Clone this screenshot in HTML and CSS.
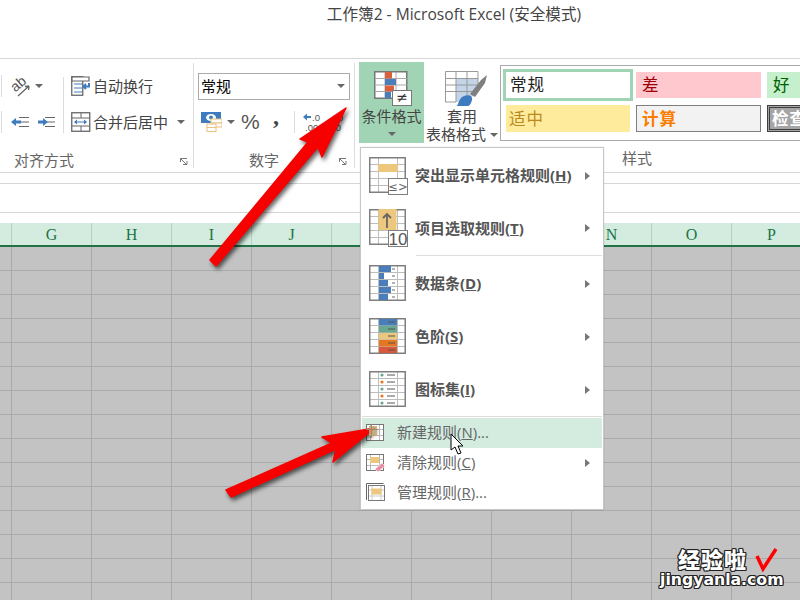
FILE: index.html
```html
<!DOCTYPE html>
<html lang="en">
<head>
    <meta charset="UTF-8">
    <title>工作簿2 - Microsoft Excel</title>
    <link rel="stylesheet" href="styles.css">
</head>
<body>
    <svg class="defs" width="0" height="0">
        <symbol id="sheet" viewBox="0 0 37 36">
            <path d="M9.5 0v36M28.5 0v36M0 7.5h37M0 14.5h37M0 21.5h37M0 28.5h37" stroke="#bdbdbd" fill="none"/>
            <rect x=".75" y=".75" width="35.5" height="34.5" fill="none" stroke="#7f7f7f" stroke-width="1.5"/>
        </symbol>
    </svg>

    <header class="title-bar">工作簿2 - Microsoft Excel (安全模式)</header>

    <section class="ribbon">
        <div class="group group-align">
            <div class="group-body">
                <div class="align-left">
                    <div class="tool-row">
                        <svg width="20" height="22" viewBox="0 0 20 22">
                            <text x="0" y="14" transform="rotate(-40 7 10)" class="ab-text">ab</text>
                            <path d="M7 21L18 11M18 11l-4 .5M18 11l-.5 4" stroke="#666" stroke-width="1.3" fill="none"/>
                        </svg>
                        <i class="caret caret-ab"></i>
                    </div>
                    <div class="tool-row">
                        <svg width="19" height="12" viewBox="0 0 19 12">
                            <path d="M8 1.5h10M8 6h10M8 10.5h10" stroke="#666" fill="none"/>
                            <path d="M0 6l5-4v2.5h5v3H5V10z" fill="#3f7cbf"/>
                        </svg>
                        <svg class="indent-right" width="19" height="12" viewBox="0 0 19 12">
                            <path d="M8 1.5h10M8 6h10M8 10.5h10" stroke="#666" fill="none"/>
                            <path d="M11 6L6 2v2.5H1v3h5V10z" fill="#3f7cbf"/>
                        </svg>
                    </div>
                </div>
                <div class="align-right">
                    <div class="tool-row">
                        <svg width="20" height="20" viewBox="0 0 20 20">
                            <rect x=".75" y=".75" width="11" height="18.5" fill="none" stroke="#666" stroke-width="1.3"/>
                            <path d="M1 1h17v4H1z" fill="#fff" stroke="#666" stroke-width="1.2"/>
                            <path d="M3 8h8M3 12h8M3 16h8" stroke="#3f7cbf" fill="none" stroke-width="1.2"/>
                            <path d="M18 7v3.5h-5M15 8l-2.5 2.500L15 13" stroke="#3f7cbf" stroke-width="2" fill="none"/>
                        </svg>
                        <span class="tool-text">自动换行</span>
                    </div>
                    <div class="tool-row">
                        <svg width="20" height="20" viewBox="0 0 20 20">
                            <rect x=".75" y=".75" width="18" height="18.5" fill="#fff" stroke="#666" stroke-width="1.3"/>
                            <path d="M1 6h18M1 14h18M10 1v5M10 14v5" stroke="#666" fill="none"/>
                            <path d="M3 10l3-2.5v2h7v-2l3 2.500-3 2.500v-2H6v2z" fill="#3f7cbf"/>
                        </svg>
                        <span class="tool-text">合并后居中</span>
                        <i class="caret caret-merge"></i>
                    </div>
                </div>
            </div>
            <div class="group-label label-align">
                <span>对齐方式</span>
                <svg class="launcher" width="8" height="8" viewBox="0 0 8 8"><path d="M.5 4V.5H7M.5.5L6 6M3 6.5h4V3" stroke="#777" fill="none"/></svg>
            </div>
        </div>

        <div class="group group-number">
            <div class="group-body number-body">
                <div class="combo"><span>常规</span><i class="caret"></i></div>
                <div class="tool-row number-tools">
                    <svg width="21" height="20" viewBox="0 0 21 20">
                        <rect x="0" y="0" width="20" height="11" fill="#3f7cbf"/>
                        <ellipse cx="10" cy="5.5" rx="5" ry="3.5" fill="#fff"/>
                        <circle cx="10" cy="5.5" r="2" fill="#3f7cbf"/>
                        <rect x="10" y="7" width="11" height="4" fill="#fff" stroke="#e8c27e"/>
                        <rect x="12" y="11" width="9" height="4" fill="#fff" stroke="#e8c27e"/>
                        <rect x="6" y="12" width="9" height="3.5" fill="#fff" stroke="#e8c27e"/>
                        <rect x="6" y="15.5" width="9" height="4" fill="#fff" stroke="#e8c27e"/>
                    </svg>
                    <i class="caret caret-currency"></i>
                    <span class="percent">%</span>
                    <span class="comma">,</span>
                    <span class="tool-sep"></span>
                    <svg class="decimal" width="20" height="20" viewBox="0 0 20 20">
                        <path d="M0 5l4-3.5v2.500h4v2H4v2.500z" fill="#3f7cbf"/>
                        <text x="9" y="9" class="decimal-text">.0</text>
                        <text x="2" y="19" class="decimal-text">.00</text>
                    </svg>
                    <svg class="decimal" width="20" height="20" viewBox="0 0 20 20">
                        <text x="4" y="9" class="decimal-text">.00</text>
                        <text x="7" y="19" class="decimal-text">.0</text>
                    </svg>
                </div>
            </div>
            <div class="group-label label-number">
                <span>数字</span>
                <svg class="launcher" width="8" height="8" viewBox="0 0 8 8"><path d="M.5 4V.5H7M.5.5L6 6M3 6.5h4V3" stroke="#777" fill="none"/></svg>
            </div>
        </div>

        <div class="group group-styles">
            <div class="styles-top">
                <div class="big-button big-button-active">
                    <svg width="38" height="35" viewBox="0 0 38 35">
                        <rect x=".75" y=".75" width="32" height="26.5" fill="#fff" stroke="#777" stroke-width="1.5"/>
                        <path d="M11 1v26M22 1v26M1 7.5h32M1 14h32M1 20.5h32" stroke="#aaa" fill="none"/>
                        <rect x="11" y="1" width="7" height="6.5" fill="#d9603c"/>
                        <rect x="11" y="8" width="11" height="6" fill="#4a7ebb"/>
                        <rect x="11" y="14.5" width="9" height="6" fill="#d9603c"/>
                        <rect x="11" y="21" width="6" height="6" fill="#4a7ebb"/>
                        <rect x="18.5" y="19.5" width="19" height="15" fill="#fff" stroke="#777"/>
                        <text x="28" y="31" class="ne-text">≠</text>
                    </svg>
                    <span class="big-label">条件格式</span>
                    <i class="caret caret-big"></i>
                </div>
                <div class="big-button big-button-table">
                    <svg width="44" height="35" viewBox="0 0 44 35">
                        <path d="M11 7.5h22V20L22 31H11z" fill="#c4d5e9"/>
                        <path d="M.5 31V.5h32.5V20M11 1v30M22 1v30M1 7.5h32M1 14h32M1 20.5h32M.5 31H11" stroke="#999" fill="none"/>
                        <path d="M25 23L36 9l6-5-2 8-10 14z" fill="#7f7f7f"/>
                        <path d="M11 35c3 0 2-8 8-10 5-2 9 0 8 4-.5 2-2 6-4 6z" fill="#3f7cbf"/>
                    </svg>
                    <span class="big-label">套用</span>
                    <span class="big-label">表格格式<i class="caret caret-table"></i></span>
                </div>
                <div class="gallery">
                    <div class="cell cell-normal">常规</div>
                    <div class="cell cell-bad">差</div>
                    <div class="cell cell-good">好</div>
                    <div class="cell cell-neutral">适中</div>
                    <div class="cell cell-calc">计算</div>
                    <div class="cell cell-check">检查</div>
                </div>
            </div>
            <div class="group-label label-styles"><span>样式</span></div>
        </div>
    </section>

    <div class="formula-bar"></div>

    <div class="col-header">
        <span class="corner"></span>
        <span>G</span><span>H</span><span>I</span><span>J</span><span></span>
        <span></span><span></span><span>N</span><span>O</span><span>P</span>
    </div>
    <div class="grid"></div>

    <div class="menu">
        <div class="menu-big">
            <svg class="menu-icon" width="40" height="38" viewBox="0 0 40 38">
                <use href="#sheet" width="37" height="36"/>
                <rect x="9" y="7" width="20" height="8" fill="#eec77f"/>
                <rect x="19.5" y="21.5" width="19" height="16" fill="#fff" stroke="#7f7f7f"/>
                <text x="29" y="34" class="icon-glyph">≤&gt;</text>
            </svg>
            <span class="menu-text-big">突出显示单元格规则(<u>H</u>)</span>
            <i class="submenu"></i>
        </div>
        <div class="menu-big menu-big-tight">
            <svg class="menu-icon" width="40" height="38" viewBox="0 0 40 38">
                <use href="#sheet" width="37" height="36"/>
                <rect x="9.5" y="0" width="18" height="21" fill="#eec77f"/>
                <path d="M18 19V5M14 9l4-4 4 4" stroke="#666" stroke-width="1.8" fill="none"/>
                <rect x="19.5" y="21.5" width="19" height="16" fill="#fff" stroke="#7f7f7f"/>
                <text x="29" y="36" class="icon-num">10</text>
            </svg>
            <span class="menu-text-big">项目选取规则(<u>T</u>)</span>
            <i class="submenu"></i>
        </div>
        <div class="menu-sep menu-sep-short"></div>
        <div class="menu-big">
            <svg class="menu-icon" width="40" height="38" viewBox="0 0 40 38">
                <use href="#sheet" width="37" height="36"/>
                <rect x="10" y="1" width="12" height="6" fill="#4a7ebb"/>
                <rect x="10" y="8" width="5" height="6" fill="#4a7ebb"/>
                <rect x="10" y="15" width="9" height="6" fill="#4a7ebb"/>
                <rect x="10" y="22" width="12" height="6" fill="#4a7ebb"/>
                <rect x="10" y="29" width="9" height="6" fill="#4a7ebb"/>
                <path d="M23 4h3M23 11h3M23 18h3M23 25h3M23 32h3" stroke="#666" fill="none"/>
            </svg>
            <span class="menu-text-big">数据条(<u>D</u>)</span>
            <i class="submenu"></i>
        </div>
        <div class="menu-big">
            <svg class="menu-icon" width="40" height="38" viewBox="0 0 40 38">
                <use href="#sheet" width="37" height="36"/>
                <rect x="10" y="1" width="18" height="6.5" fill="#4a7ebb"/>
                <rect x="10" y="8" width="18" height="6.5" fill="#6aa78f"/>
                <rect x="10" y="15" width="18" height="6.5" fill="#eec77f"/>
                <rect x="10" y="22" width="18" height="6.5" fill="#e6761f"/>
                <rect x="10" y="29" width="18" height="6" fill="#d9573a"/>
                <path d="M19 4h7M19 11h7M19 18h7M19 25h7M19 32h7" stroke="#555" fill="none"/>
            </svg>
            <span class="menu-text-big">色阶(<u>S</u>)</span>
            <i class="submenu"></i>
        </div>
        <div class="menu-big">
            <svg class="menu-icon" width="40" height="38" viewBox="0 0 40 38">
                <use href="#sheet" width="37" height="36"/>
                <circle cx="13" cy="4" r="1.6" fill="#6aa78f"/>
                <circle cx="13" cy="11" r="1.6" fill="#e6761f"/>
                <circle cx="13" cy="18" r="1.6" fill="#6aa78f"/>
                <circle cx="13" cy="25" r="1.6" fill="#e6761f"/>
                <circle cx="13" cy="32" r="1.6" fill="#6aa78f"/>
                <path d="M18 4h8M18 11h8M18 18h8M18 25h8M18 32h8" stroke="#555" fill="none"/>
            </svg>
            <span class="menu-text-big">图标集(<u>I</u>)</span>
            <i class="submenu"></i>
        </div>
        <div class="menu-sep"></div>
        <div class="menu-small menu-small-active">
            <svg class="small-icon" width="20" height="20" viewBox="0 0 20 20">
                <rect x=".5" y="1.500" width="17" height="16" fill="#fff" stroke="#777"/>
                <path d="M4.500 2v15M13.500 2v15M1 6.500h16M1 12.500h16" stroke="#bbb" fill="none"/>
            </svg>
            <span class="menu-text">新建规则(<u>N</u>)...</span>
        </div>
        <div class="menu-small">
            <svg class="small-icon" width="20" height="20" viewBox="0 0 20 20">
                <rect x=".5" y="1.500" width="17" height="16" fill="#fff" stroke="#777"/>
                <path d="M4.500 2v15M13.500 2v15M1 6.500h16M1 12.500h16" stroke="#bbb" fill="none"/>
                <rect x="4" y="4" width="9" height="6" fill="#eec77f"/>
                <path d="M9 16l7-6 3 3-7 6z" fill="#ea8fa3" stroke="#fff" stroke-width=".6"/>
            </svg>
            <span class="menu-text">清除规则(<u>C</u>)</span>
            <i class="submenu"></i>
        </div>
        <div class="menu-small">
            <svg class="small-icon" width="20" height="20" viewBox="0 0 20 20">
                <path d="M.5 17V.5h17" stroke="#666" fill="none"/>
                <rect x="2.500" y="2.500" width="16" height="15" fill="#fff" stroke="#777"/>
                <path d="M6 3v14M15 3v14M3 7h15M3 13h15" stroke="#ccc" fill="none"/>
                <rect x="5.500" y="5.500" width="10" height="6" fill="#eec77f"/>
            </svg>
            <span class="menu-text">管理规则(<u>R</u>)...</span>
        </div>
    </div>

    <svg class="overlay" width="800" height="600" viewBox="0 0 800 600">
        <path class="arrow" d="M210 260L308 142 300 139 346 108 322 157 318 147 216 266z"/>
        <path class="arrow" d="M226 490L332 443 322 437 375 428 333 462 336 449 231 497z"/>
        <path d="M369 426h8v10h-8z" fill="#c9a876" opacity=".85"/>
        <path d="M366 429.500h12M371.500 424v14" stroke="#9a8a70" fill="none"/>
        <path d="M451 434v16l4-3 3 7 3-1-3-7h5z" fill="#fff" stroke="#000"/>
        <path d="M757 556l6 13 13-20" stroke="#f00" stroke-width="3.5" fill="none"/>
    </svg>

    <div class="watermark">
        <div class="wm-top">经验啦</div>
        <div class="wm-bottom">jingyanla.com</div>
    </div>
</body>
</html>
```

FILE: styles.css
```css
* { box-sizing: border-box; }
html, body { margin: 0; height: 100%; }
body { width: 800px; height: 600px; overflow: hidden; display: flex; flex-direction: column; position: relative; background: #fff; font-family: "Open Sans", "Noto Sans CJK SC", sans-serif; color: #444; }
.defs { position: absolute; }
i { display: block; font-style: normal; }

.title-bar { height: 59px; padding: 3px 0 0 108px; border-bottom: 1px solid #d6d6d6; text-align: center; font-size: 15.6px; line-height: 22px; color: #444; }

.ribbon { height: 114px; padding-top: 4px; display: flex; border-bottom: 1px solid #d6d6d6; }
.group { display: flex; flex-direction: column; height: 105px; }
.group-body { height: 77px; }
.group-label { display: flex; align-items: center; justify-content: space-between; height: 28px; padding-top: 12px; font-size: 15px; line-height: 14px; color: #666; }
.launcher { margin-top: 3px; }

.group-align { width: 194px; border-right: 1px solid #dcdcdc; }
.group-align .group-body { display: flex; padding-top: 5px; }
.label-align { padding: 12px 5px 0 14px; }
.align-left { width: 62px; margin-left: 1px; }
.align-right { flex: 1; }
.tool-row { display: flex; align-items: center; height: 36px; }
.align-left .tool-row { padding-left: 9px; border-left: 1px solid #dcdcdc; height: 22px; margin: 7px 0 14px; }
.align-right { border-left: 1px solid #dcdcdc; height: 56px; margin-top: 9px; }
.align-right .tool-row { padding-left: 7px; height: 18px; margin-bottom: 18px; }
.tool-text { margin-left: 2px; font-size: 15px; line-height: 18px; }
.indent-right { margin-left: 7px; }

.caret { width: 0; height: 0; border-left: 4px solid transparent; border-right: 4px solid transparent; border-top: 4px solid #666; }
.caret-ab { margin-left: 4px; }
.caret-merge { margin-left: 9px; }
.caret-currency { margin: 0 6px 0 5px; }
.caret-big { margin-top: 7px; }
.caret-table { display: inline-block; margin: 0 0 3px 4px; }

.group-number { width: 161px; border-right: 1px solid #dcdcdc; }
.number-body { padding: 10px 0 0 4px; }
.combo { display: flex; align-items: center; justify-content: space-between; width: 152px; height: 27px; padding: 0 4px 2px 2px; border: 1px solid #ababab; font-size: 15px; color: #000; }
.number-tools { padding-left: 3px; height: 24px; margin-top: 10px; }
.percent { width: 18px; font-size: 21px; line-height: 24px; color: #555; font-family: "Liberation Sans", sans-serif; }
.comma { width: 18px; margin: 0 0 12px 14px; font-size: 24px; line-height: 18px; font-weight: bold; color: #444; font-family: "Liberation Serif", serif; }
.tool-sep { width: 1px; height: 22px; margin: 0 8px 0 3px; background: #dcdcdc; }
.decimal { margin-right: 3px; }
.decimal-text { font-family: "Liberation Sans", sans-serif; font-size: 9.5px; fill: #555; }
.label-number { padding: 12px 7px 0 55px; }

.group-styles { flex: 1; min-width: 0; padding-left: 4px; }
.styles-top { display: flex; height: 85px; margin-top: -1px; }
.big-button { display: flex; flex-direction: column; align-items: center; width: 65px; padding-top: 9px; font-size: 15px; }
.big-button svg { margin-left: 3px; height: 36px; padding-bottom: 1px; }
.big-button-active { background: #a0d4b4; }
.big-button-table { width: 76px; }
.big-button-table svg { margin-left: 9px; }
.big-label { display: block; height: 18px; line-height: 18px; white-space: nowrap; }
.ne-text { font-size: 14px; text-anchor: middle; fill: #333; font-family: "DejaVu Sans", sans-serif; }

.gallery { flex: 1; height: 76px; margin-top: 3px; padding: 3px 0 0 2px; display: grid; grid-template-columns: 130px 125px 40px; grid-template-rows: 32px 27px; column-gap: 3px; row-gap: 4px; border: 1px solid #aaa; border-right: 0; overflow: hidden; }
.cell { display: flex; align-items: center; padding: 0 0 2px 6px; font-size: 16.5px; letter-spacing: 1px; white-space: nowrap; }
.cell-normal { border: 3px solid #a0d4b4; padding-left: 4px; color: #222; }
.cell-bad { margin: 3px 0; background: #ffc7ce; color: #9c0006; }
.cell-good { margin: 3px 0 3px 3px; background: #c6efce; color: #006100; }
.cell-neutral { margin: 0 3px; padding-left: 3px; background: #ffeb9c; color: #b98a20; }
.cell-calc { padding-left: 5px; border: 1px solid #7f7f7f; background: #f2f2f2; color: #fa7d00; font-weight: bold; }
.cell-check { margin-left: 3px; width: 60px; padding-left: 2px; border: 3px double #3f3f3f; background: #a5a5a5; color: #fff; font-weight: bold; }
.label-styles { justify-content: flex-start; height: 21px; margin-top: 5px; padding: 0 0 0 263px; }

.formula-bar { height: 30px; margin-top: 10px; border-top: 1px solid #d6d6d6; border-bottom: 1px solid #d6d6d6; }

.col-header { display: flex; height: 24px; margin-top: 10px; background: #d3ecdf; border-bottom: 2px solid #217346; font-family: "Liberation Serif", serif; font-size: 16px; color: #217346; }
.col-header span { flex: none; width: 80px; border-right: 1px solid #b5cfc1; text-align: center; line-height: 24px; }
.col-header .corner { width: 12px; }

.grid { flex: 1; background-color: #c3c3c3; background-image: linear-gradient(#a9a9a9 1px, transparent 1px), linear-gradient(90deg, #a9a9a9 1px, transparent 1px); background-size: 80px 24px; background-position: 11px 23px; }

.menu { position: absolute; left: 360px; top: 147px; width: 244px; height: 363px; padding: 1px 1px 0; background: #fff; border: 1px solid #c6c6c6; box-shadow: 0 0 1px rgba(0, 0, 0, .2); }
.menu-big { display: flex; align-items: center; height: 53px; padding-left: 7px; }
.menu-big-tight { height: 52px; }
.menu-icon { flex: none; overflow: visible; }
.menu-text-big { margin-left: 6px; padding-bottom: 2px; font-size: 15px; font-weight: bold; color: #555; white-space: nowrap; }
.submenu { width: 0; height: 0; margin-left: auto; margin-right: 12px; border-top: 4px solid transparent; border-bottom: 4px solid transparent; border-left: 5px solid #777; }
.menu-sep { height: 1px; margin: 0 0 1px; background: #dedede; }
.menu-sep-short { margin: 1px 0 1px 54px; }
.menu-small { display: flex; align-items: center; height: 30px; padding-left: 4px; }
.menu-small-active { background: #d3ecdf; }
.small-icon { flex: none; overflow: visible; }
.menu-text { margin-left: 11px; padding-bottom: 3px; font-size: 15px; color: #666; white-space: nowrap; }

.overlay { position: absolute; left: 0; top: 0; pointer-events: none; }
.arrow { fill: #f60000; stroke: #f60000; stroke-width: 1.5; stroke-linejoin: round; filter: drop-shadow(2px 3px 2px rgba(0, 0, 0, .6)); }
.ab-text { font-family: "Liberation Sans", sans-serif; font-size: 14px; fill: #555; }
.icon-glyph { font-family: "DejaVu Sans", sans-serif; font-size: 11.5px; text-anchor: middle; fill: #666; }
.icon-num { font-family: "Liberation Sans", sans-serif; font-size: 17px; text-anchor: middle; fill: #555; }

.watermark { position: absolute; left: 660px; top: 546px; width: 130px; color: #fff; font-weight: 900; font-family: "Noto Sans CJK SC", sans-serif; text-shadow: 1px 0 #222, -1px 0 #222, 0 1px #222, 0 -1px #222, 1px 1px #222, -1px -1px #222, 1px -1px #222, -1px 1px #222; }
.wm-top { padding-left: 18px; font-size: 22px; line-height: 25px; white-space: nowrap; letter-spacing: 1px; }
.wm-bottom { font-family: "DejaVu Sans", sans-serif; font-size: 15.7px; font-weight: bold; line-height: 18px; white-space: nowrap; }
```
